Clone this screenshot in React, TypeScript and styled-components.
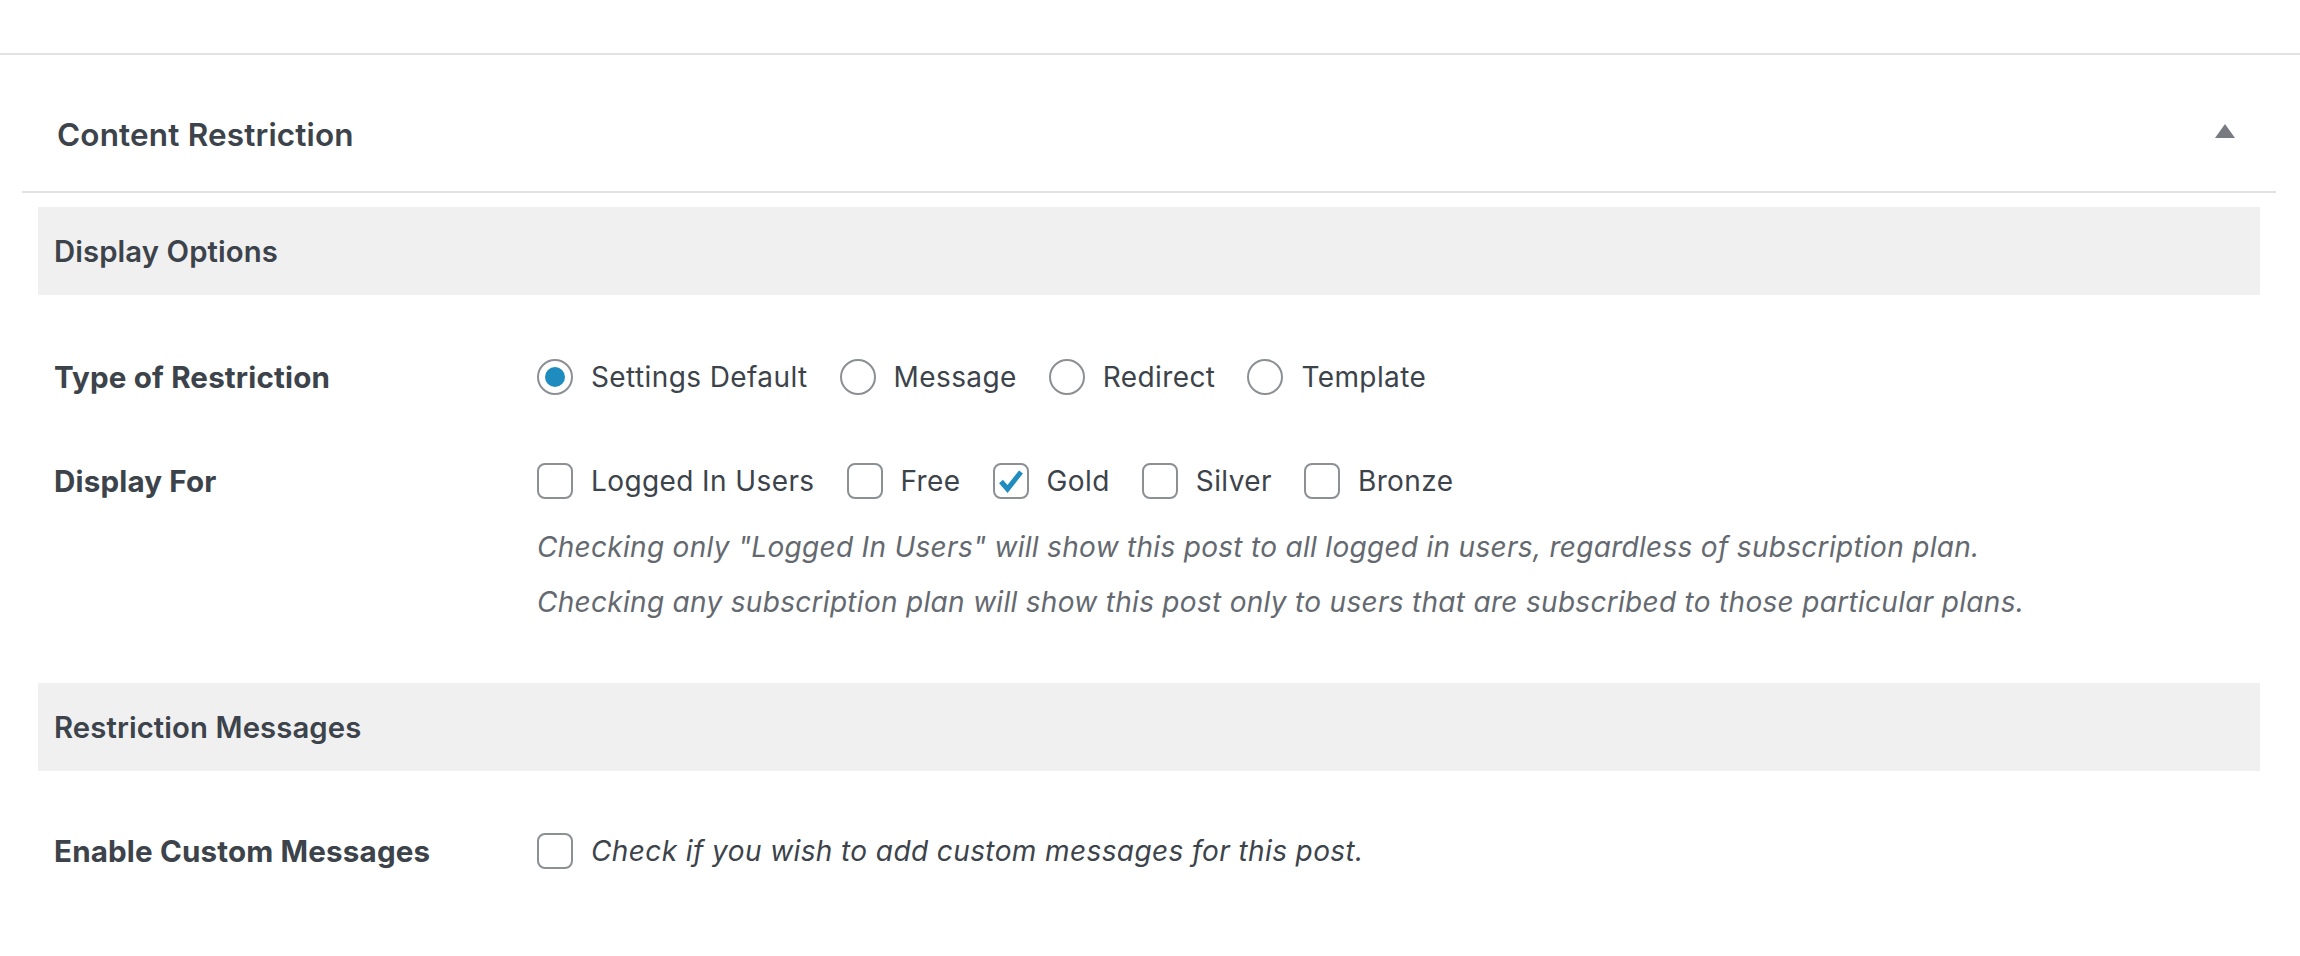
import React from "react";
import styled, { createGlobalStyle } from "styled-components";

const GlobalStyle = createGlobalStyle`
  html, body { margin: 0; padding: 0; background: #ffffff; }
  body {
    font-family: Inter, "Noto Sans", "Liberation Sans", sans-serif;
    color: #3c434a;
    -webkit-font-smoothing: antialiased;
  }
`;

const Page = styled.div`
  width: 2300px;
  height: 956px;
  overflow: hidden;
  background: #fff;
`;

const TopStrip = styled.div`
  height: 53px;
  border-bottom: 2px solid #e2e2e4;
`;

const Postbox = styled.section`
  margin: 0 24px 0 22px;
`;

const PostboxHeader = styled.header`
  height: 138px;
  display: flex;
  align-items: center;
  justify-content: space-between;
  padding: 22px 41px 0 35px;
  box-sizing: border-box;
  border-bottom: 2px solid #e2e2e4;
`;

const PostboxTitle = styled.h2`
  margin: 0;
  font-size: 31.5px;
  font-weight: 600;
  color: #3c434a;
  letter-spacing: 0.15px;
`;

const ToggleButton = styled.button`
  border: 0;
  background: none;
  padding: 0;
  width: 20px;
  height: 14px;
  display: flex;
  margin-top: -6px;
  cursor: pointer;
`;

const Inside = styled.div`
  padding: 14px 16px 0 16px;
`;

const SectionHeading = styled.h3<{ $top?: number }>`
  margin: ${(p) => p.$top ?? 0}px 0 0 0;
  height: 88px;
  display: flex;
  align-items: center;
  padding: 0 16px;
  background: #f0f0f1;
  font-size: 29.3px;
  font-weight: 600;
  color: #3c434a;
  letter-spacing: 0.1px;
`;

const Row = styled.div<{ $top: number }>`
  display: grid;
  grid-template-columns: 483px 1fr;
  padding-left: 16px;
  margin-top: ${(p) => p.$top}px;
`;

const RowLabel = styled.div`
  font-size: 29.6px;
  font-weight: 700;
  line-height: 40px;
  color: #3c434a;
  letter-spacing: 0.15px;
`;

const Field = styled.div`
  display: flex;
  flex-direction: column;
`;

const OptionLine = styled.div`
  display: flex;
  align-items: center;
  height: 40px;
  gap: 32px;
`;

const Option = styled.label`
  display: flex;
  align-items: center;
  gap: 18px;
  font-size: 28px;
  line-height: 40px;
  color: #3c434a;
  letter-spacing: 0.4px;
`;

const RadioCircle = styled.span<{ $checked?: boolean }>`
  width: 36px;
  height: 36px;
  box-sizing: border-box;
  border: 2px solid #8c8f94;
  border-radius: 50%;
  display: flex;
  align-items: center;
  justify-content: center;
  flex: none;
  &::after {
    content: "";
    display: ${(p) => (p.$checked ? "block" : "none")};
    width: 20px;
    height: 20px;
    border-radius: 50%;
    background: #1e8cbe;
  }
`;

const CheckBox = styled.span`
  width: 36px;
  height: 36px;
  box-sizing: border-box;
  border: 2px solid #8c8f94;
  border-radius: 8px;
  display: flex;
  align-items: center;
  justify-content: center;
  flex: none;
`;

const Descriptions = styled.div`
  margin-top: 19px;
  display: flex;
  flex-direction: column;
`;

const Description = styled.p`
  margin: 0;
  font-size: 28px;
  line-height: 55px;
  font-style: italic;
  color: #646970;
  letter-spacing: 0.3px;
`;

const InlineNote = styled.span`
  font-style: italic;
  color: #3c434a;
`;

const Radio = ({ label, checked }: { label: string; checked?: boolean }) => (
  <Option>
    <RadioCircle $checked={checked} />
    {label}
  </Option>
);

const Check = ({ label, checked, italic }: { label: string; checked?: boolean; italic?: boolean }) => (
  <Option>
    <CheckBox>
      {checked && (
        <svg width="26" height="24" viewBox="0 0 26 24">
          <path d="M3 12.5 L9.5 20 L23 3" fill="none" stroke="#1e8cbe" strokeWidth="5" strokeLinejoin="miter" />
        </svg>
      )}
    </CheckBox>
    {italic ? <InlineNote>{label}</InlineNote> : label}
  </Option>
);

export default function App() {
  return (
    <Page>
      <GlobalStyle />
      <TopStrip />
      <Postbox>
        <PostboxHeader>
          <PostboxTitle>Content Restriction</PostboxTitle>
          <ToggleButton aria-label="Toggle panel">
            <svg width="20" height="14" viewBox="0 0 20 14">
              <polygon points="10,0 20,14 0,14" fill="#787c82" />
            </svg>
          </ToggleButton>
        </PostboxHeader>
        <Inside>
          <SectionHeading>Display Options</SectionHeading>
          <Row $top={62}>
            <RowLabel>Type of Restriction</RowLabel>
            <Field>
              <OptionLine>
                <Radio label="Settings Default" checked />
                <Radio label="Message" />
                <Radio label="Redirect" />
                <Radio label="Template" />
              </OptionLine>
            </Field>
          </Row>
          <Row $top={64}>
            <RowLabel>Display For</RowLabel>
            <Field>
              <OptionLine>
                <Check label="Logged In Users" />
                <Check label="Free" />
                <Check label="Gold" checked />
                <Check label="Silver" />
                <Check label="Bronze" />
              </OptionLine>
              <Descriptions>
                <Description>
                  Checking only "Logged In Users" will show this post to all logged in users, regardless of subscription plan.
                </Description>
                <Description>
                  Checking any subscription plan will show this post only to users that are subscribed to those particular plans.
                </Description>
              </Descriptions>
            </Field>
          </Row>
          <SectionHeading $top={53}>Restriction Messages</SectionHeading>
          <Row $top={60}>
            <RowLabel>Enable Custom Messages</RowLabel>
            <Field>
              <OptionLine>
                <Check label="Check if you wish to add custom messages for this post." italic />
              </OptionLine>
            </Field>
          </Row>
        </Inside>
      </Postbox>
    </Page>
  );
}
